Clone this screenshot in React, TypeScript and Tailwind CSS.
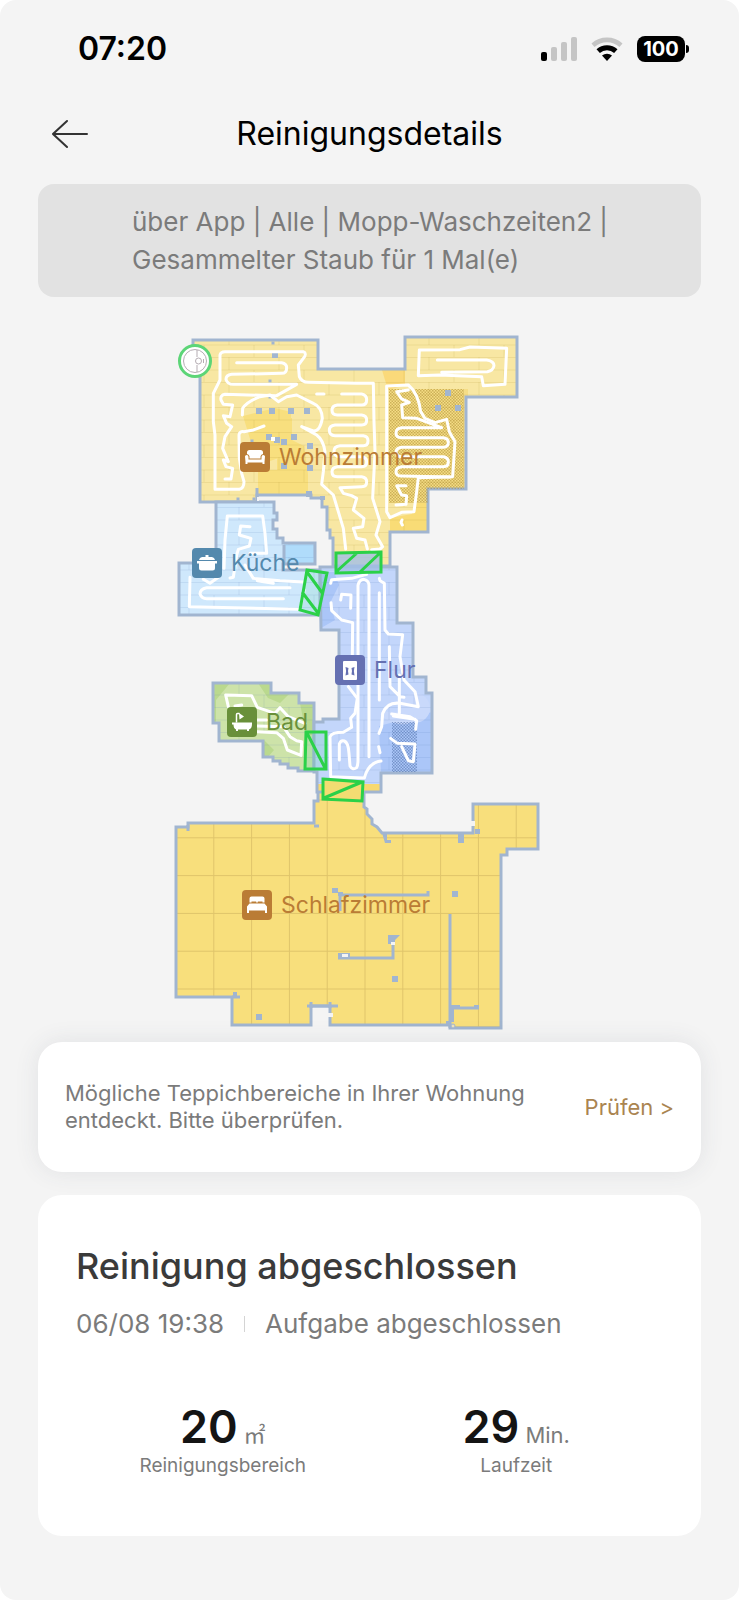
import { ReactNode } from "react";

const WALL = "#a1b5d0";

const StatusBar = () => (
  <div className="flex h-[98px] items-center justify-between pl-[78px] pr-[50px]">
    <span className="text-[32px] leading-[40px] font-semibold text-black">07:20</span>
    <div className="flex items-center">
      <svg width="38" height="24" viewBox="0 0 38 24" aria-hidden="true">
        <rect x="0" y="15" width="6" height="9" rx="2" fill="#000" />
        <rect x="10" y="10" width="6" height="14" rx="2" fill="#c5c5c5" />
        <rect x="20" y="5" width="6" height="19" rx="2" fill="#c5c5c5" />
        <rect x="30" y="0" width="6" height="24" rx="2" fill="#c5c5c5" />
      </svg>
      <svg className="ml-3" width="32" height="24" viewBox="0 0 32 24" fill="none" aria-hidden="true">
        <path d="M2 8.2A21 21 0 0 1 30 8.2" stroke="#c5c5c5" strokeWidth="4.6" />
        <path d="M7.2 14.2A13 13 0 0 1 24.8 14.2" stroke="#000" strokeWidth="5" />
        <path d="M16 24L11 18.6A7.4 7.4 0 0 1 21 18.6Z" fill="#000" />
      </svg>
      <div className="ml-[14px] flex h-[26px] w-12 items-center justify-center rounded-lg bg-black text-[20px] leading-[26px] font-bold text-white">
        100
      </div>
      <div className="ml-px h-2 w-[3px] rounded-r-full bg-black" />
    </div>
  </div>
);

interface RoomLabelProps {
  x: number;
  y: number;
  name: string;
  color: string;
  children: ReactNode;
}

const RoomLabel = ({ x, y, name, color, children }: RoomLabelProps) => (
  <g transform={`translate(${x} ${y})`}>
    <rect width="30" height="30" rx="4" fill={color} />
    {children}
    <text x="39" y="23" fontSize="23" fill={color}>
      {name}
    </text>
  </g>
);

// small square obstacles, centre points
const Obstacles = ({ points, size }: { points: number[][]; size: number }) => (
  <g fill={WALL}>
    {points.map(([x, y]) => (
      <rect key={`${x}-${y}`} x={x - size / 2} y={y - size / 2} width={size} height={size} />
    ))}
  </g>
);

const LIVING =
  "M193 340H318V369H405V337H517V397H466V489H428V532H390V566H333V538H330V530H327V507H322V498H311V495H257V502H200V377L193 370Z";
const KITCHEN =
  "M216 502H274V513H277V520H273V529H277V538H283V543H315V564H283V570H320V615H179V563H216Z";
const HALL =
  "M320 567H397V623H413V677H426V693H432V773H381V792H317V772H314V722H323V719H339V630H321Z";
const BATH =
  "M213 683H271V693H299V703H314V771H298V768H288V764H280V761H273V757H263V741H219V723H213Z";
const BEDROOM =
  "M176 827H188V823H314V801H318V786H364V807L367 809V814L372 819V824L377 827L382 833H473V804H538V849H507V855H501V1028H450V1025H330V1006H311V1025H232V997H176Z";

const CleaningMap = () => (
  <svg
    className="h-auto w-[400px] max-w-full"
    viewBox="170 325 400 710"
    fill="none"
    role="img"
    aria-label="Reinigungskarte"
  >
    <defs>
      <pattern id="planks" width="50" height="25" patternUnits="userSpaceOnUse" x="176" y="332">
        <path d="M0 .5H50M0 13H50M3 0V13M28 13V25" stroke="#a08420" strokeOpacity=".13" />
      </pattern>
      <pattern id="bluePlanks" width="50" height="25" patternUnits="userSpaceOnUse" x="186" y="332">
        <path d="M0 .5H50M0 13H50M3 0V13M28 13V25" stroke="#4a78b8" strokeOpacity=".12" />
      </pattern>
      <pattern id="tiles" width="37.8" height="37.8" patternUnits="userSpaceOnUse" x="176.5" y="800.5">
        <path d="M0 37.3H37.8M37.3 0V37.8" stroke="#dfc46a" />
      </pattern>
      <pattern id="carpet" width="3" height="3" patternUnits="userSpaceOnUse">
        <path d="M0 0h1.5v1.5H0zM1.5 1.5H3V3H1.5z" fill="#a5852c" fillOpacity=".5" />
      </pattern>
      <pattern id="blueCarpet" width="3" height="3" patternUnits="userSpaceOnUse">
        <path d="M0 0h1.5v1.5H0zM1.5 1.5H3V3H1.5z" fill="#4b6ba6" fillOpacity=".55" />
      </pattern>
    </defs>

    {/* Schlafzimmer */}
    <path d={BEDROOM} fill="#f8df7c" />
    <path d={BEDROOM} fill="url(#tiles)" stroke={WALL} strokeWidth="3" />

    {/* Wohnzimmer */}
    <path d={LIVING} fill="#f8e7a3" />
    <path d="M382 370H405V385L388 390Z" fill="#fad97a" />
    <path d="M243 416L275 408L291 412V426H284L288 455L258 465ZM277 418H292V440L304 446L308 474V495H258V470H277Z" fill="#f8df7e" />
    <path d="M466 489H428V532H390V518L412 514L415 505V489Z" fill="#f9dc76" />
    <path d="M389 389H468V397H466V489H428V503H389Z" fill="#f5dd86" />
    <path d={LIVING} fill="url(#planks)" stroke={WALL} strokeWidth="3" />
    <path d="M389 389H464V489H428V503H389Z" fill="url(#carpet)" />

    {/* Küche */}
    <path d={KITCHEN} fill="#cfe8fc" />
    <path d="M284 543H315V564H284Z" fill="#b0dcfb" />
    <path d={KITCHEN} fill="url(#bluePlanks)" stroke={WALL} strokeWidth="3" />
    <path d="M284 545V563" stroke={WALL} strokeWidth="3" />

    {/* Bad */}
    <path d={BATH} fill="#cde3a9" />
    <path d="M213 683H230L216 700V723H213ZM258 683H271V693H290L280 703L268 698ZM264 740L274 750L268 757H264ZM300 703H314V735H306Z" fill="#bad98e" />
    <path d={BATH} fill="url(#bluePlanks)" stroke={WALL} strokeWidth="3" />

    {/* Flur */}
    <path d={HALL} fill="#c3d6fb" />
    <path d="M321 572H334L339 585L330 603L335 620L321 628ZM379 726L432 712V773H381Z" fill="#abc6f8" />
    <circle cx="415" cy="708" r="15" fill="#c9d9fb" />
    <path d="M380 715Q398 730 415 721L413 712H382Z" fill="#c9d9fb" />
    <path d="M318 784H380V791H318Z" fill="#f8d970" />
    <path d={HALL} fill="url(#bluePlanks)" stroke={WALL} strokeWidth="3" />
    <path d="M392 722H417V772H392Z" fill="url(#blueCarpet)" />

    {/* inner walls and gaps */}
    <g stroke={WALL} strokeWidth="3">
      <path d="M340 911V895H428V891M338 958H393V941M450 914V1028M453 1008H479M307 1006H338M311 1002V1008M330 1002V1008M232 997H240M188 825V831M314 826H319M257 488V497" />
    </g>
    <g fill={WALL}>
      <path d="M332 888h6v4h5v4h-5v-3h-6zM338 953h12v6h-12zM388 935h12l-5 5v4h-7zM382 833h5v7h4v3h-6zM458 833h6v10h-6zM475 829h5v5h-5zM452 1005h8v4h-6v13h-4v-17zM474 1005h5v4h-5zM233 992h4v5h-4zM446 1021h5v5h-5zM320 496h5v4h-5z" />
    </g>
    <path d="M342 954h6v3h-6zM391 942h4v3h-4zM470 821h5v5h-5zM328 1013h5v4h-5zM257 497h2v4h-2z" fill="#f4f4f4" />
    <circle cx="453" cy="1026" r="2" fill="#ece2c0" stroke={WALL} />
    <Obstacles size={6} points={[[455, 894], [395, 979], [259, 1017]]} />
    <Obstacles
      size={6}
      points={[
        [259, 411], [272, 411], [291, 411], [307, 411], [275, 355], [294, 437], [284, 442],
        [310, 446], [310, 468], [284, 466], [309, 494], [269, 437], [277, 440], [448, 393],
        [438, 408], [458, 408],
      ]}
    />
    <Obstacles size={3} points={[[273, 343], [270, 381], [270, 397], [238, 499], [254, 499], [252, 441]]} />
    <path d="M271 437h4v4h-4z" fill="#fff" />

    {/* driven route, drawn at three times the map scale */}
    <g stroke="#fff" strokeWidth="9" strokeLinecap="round" strokeLinejoin="round">
      <g transform="translate(170 325) scale(.33333)">
        <path d="M282 303L250 315L222 320Q208 318 207 330L208 400L215 445L222 470Q222 490 208 493L135 493L135 330L130 290V205L150 165V90Q152 80 165 80H400Q412 85 400 100L385 120L388 155Q395 172 415 172L560 175H610L612 290L615 380L608 520L630 590L618 630L638 665L630 672L605 674" />
        <path d="M200 113H335Q350 116 350 128Q350 145 335 145L185 148Q168 150 168 163Q172 178 190 178H380L320 212L165 208Q150 210 153 225L160 238L188 240L180 275L160 272L170 295L185 305L165 335L158 370L175 410L160 405L168 425L188 430L183 462H165" />
        <path d="M217 270L218 250Q230 230 270 215L300 210L325 230L350 215L380 210L430 235Q455 245 457 280Q450 320 430 318L395 305L440 330Q460 345 465 380L460 440L455 478L490 510L505 560L520 610L527 672M440 207H462" />
        <path d="M515 207H575Q590 210 590 224Q590 240 575 240H502Q486 242 486 255Q486 270 502 270H575Q590 272 590 285Q590 300 575 300H495Q478 302 478 316Q478 332 495 332H580Q594 334 594 347Q594 362 580 362H510Q492 364 492 378Q492 395 510 395H575Q590 397 590 410Q590 425 575 425H502Q486 427 486 440Q486 455 502 455H575Q590 457 590 470Q590 485 575 485L510 488L520 505L545 512L560 520L550 555L582 580L578 605L550 610L560 640L585 645L592 672" />
      </g>
      <g transform="translate(350 325) scale(.33333)">
        <path d="M205 150L208 75L330 74L360 66L470 70L465 178L400 182L395 155L270 150L205 152ZM262 105H410Q432 108 432 122Q430 137 412 140L275 142" />
        <path d="M110 183L175 180Q205 205 212 260L225 280L255 293L290 283L298 320L315 350L308 455L205 458L200 500L192 560L155 562L120 578L110 560Z" />
        <path d="M175 195L140 200L155 222L178 232L155 240L158 278L200 280L275 308H155Q138 310 138 324Q138 338 155 338H280Q295 340 295 352Q295 367 280 367H155Q138 369 138 382Q138 395 155 395H280Q295 397 295 410Q295 425 280 425H155Q138 427 138 440Q138 453 155 453L300 456" />
        <path d="M168 482H140L155 510L170 512L168 538L138 540M156 585L153 592L157 600" />
      </g>
      <g transform="translate(170 490) scale(.33333)">
        <path d="M162 235L165 150L172 78H278L285 130L290 190H240" />
        <path d="M240 110L212 108L208 135L243 145L238 168L205 178L200 195L190 262L180 264" />
        <path d="M60 262L58 350L390 358L403 300M100 268L120 280L145 262M225 225L250 265L330 272L400 276M262 272L310 280" />
        <path d="M360 293H110Q90 297 90 312Q95 326 110 326H340" />
      </g>
      <g transform="translate(300 540) scale(.33333)">
        <path d="M92 130L95 119L155 115L200 103M152 205L153 165L125 163L122 180M93 188L95 212L125 240L158 248L157 345" />
        <path d="M118 660V612Q122 600 133 603Q145 608 147 640L150 678Q158 692 170 683Q174 675 174 660V136Q178 118 192 118Q207 122 207 136V650" />
        <path d="M238 115L240 122L253 130L255 270L265 282L308 284L300 350L312 420L345 455L355 500L300 490Q262 485 248 520L245 560L237 580" />
        <path d="M238 158V480M268 320L270 440L300 470L312 472M298 405V520M275 522L330 530L350 542L347 568M280 528L345 538" />
        <path d="M272 595L292 610L345 612L340 665L325 662L305 620" />
        <path d="M243 663Q205 668 193 714L92 710L90 590Q95 577 130 577L155 562L152 535L165 520L172 475L145 440M236 620L240 638" />
      </g>
      <g transform="translate(200 670) scale(.33333)">
        <path d="M85 110L77 75L155 77L172 112L225 130L240 113L265 140L315 160M105 108L125 105M172 150H200M172 168L250 170L270 200L290 212M172 185L230 188L250 205L262 240L303 256L305 215L290 212" />
      </g>
    </g>

    {/* doorways */}
    <g stroke="#2bd148" strokeWidth="3">
      <path d="M336 553L381 552V572L336 573ZM337 571L357 553M360 572L380 553" fill="#a3bfe6" fillOpacity=".8" />
      <path d="M307 570L327 573L318 615L300 610ZM307 572L323 594M302 592L318 613" fill="#4ed0a0" fillOpacity=".15" />
      <path d="M306 732H326V769H305ZM307 733L325 768" fill="#4ed0a0" fillOpacity=".2" />
      <path d="M323 779L363 782L362 801L323 799ZM324 798L362 782" fill="#f3dc72" />
    </g>

    {/* dock */}
    <circle cx="195" cy="361" r="15.5" fill="#fff" stroke="#5cd577" strokeWidth="3" />
    <circle cx="195" cy="361" r="11.5" stroke="#b5adb3" />
    <path d="M197 350V357M197 365V372" stroke="#b5adb3" />
    <circle cx="198.5" cy="361" r="3" stroke="#b5adb3" />
    <path d="M203.500 359V363" stroke="#b5adb3" />

    <RoomLabel x={240} y={442} name="Wohnzimmer" color="#ba7c35">
      <path d="M7 12V10.500Q7 8 9.500 8H20.500Q23 8 23 10.500V12Q20.500 12.500 20.500 14.500V16.500H9.500V14.500Q9.500 12.500 7 12Z" fill="#fff" />
      <path d="M5 14.500Q5 13 6.800 13Q8.500 13 8.500 15V17.500H21.500V15Q21.500 13 23.200 13Q25 13 25 14.500L24.500 20V22H22.500V20.500H7.500V22H5.500V20Z" fill="#fff" />
    </RoomLabel>
    <RoomLabel x={192} y={548} name="Küche" color="#5489ad">
      <path d="M13.500 7H16.500V9H20Q22.500 9.500 23 12H7Q7.500 9.500 10 9H13.500ZM5 13H25V15.500H23V20Q23 22.500 20.500 22.500H9.500Q7 22.500 7 20V15.500H5Z" fill="#fff" />
    </RoomLabel>
    <RoomLabel x={335} y={655} name="Flur" color="#6570b2">
      <rect x="8" y="6" width="14" height="19" rx="1" fill="#fff" />
      <path d="M10.500 12L13.500 13Q12.500 16 13.500 19.500L10.500 20.500Q11.800 16 10.500 12ZM19.500 12L16.500 13Q17.500 16 16.500 19.500L19.500 20.500Q18.200 16 19.500 12Z" fill="#6570b2" />
    </RoomLabel>
    <RoomLabel x={227} y={707} name="Bad" color="#69903a">
      <path d="M5 15.500H25V17Q25 21.500 22 22.500V24H20V22.500H11V24H9V22.500Q6.500 21.500 6.500 17.500H5Z" fill="#fff" />
      <path d="M9.500 15.500V7.500Q9.500 6.500 10.500 6.500H12.500" stroke="#fff" strokeWidth="1.5" />
      <path d="M12 6L17 9.500L12.500 12.500Z" fill="#fff" />
    </RoomLabel>
    <RoomLabel x={242} y={890} name="Schlafzimmer" color="#ba7c35">
      <path d="M7.500 12.500V8.500Q7.500 6.500 9.500 6.500H20.500Q22.500 6.500 22.500 8.500V12.500H20.500V11.500H15.800V12.500H14.200V11.500H9.500V12.500ZM7.500 13.500H22.500L25 16.500V23H23V20.500H7V23H5V16.500Z" fill="#fff" />
    </RoomLabel>
  </svg>
);

const Stat = ({ value, unit, label }: { value: string; unit: string; label: string }) => (
  <div className="flex flex-1 flex-col items-center">
    <div className="flex h-[54px] items-baseline gap-[6px] leading-[54px]">
      <span className="text-[45px] font-semibold text-[#141414]">{value}</span>
      <span className="text-[22px] text-[#7b7b7b]">{unit}</span>
    </div>
    <span className="text-[19px] leading-6 text-[#7b7b7b]">{label}</span>
  </div>
);

const App: React.FC = () => {
  return (
    <div className="min-h-screen bg-white font-['Inter','Noto_Sans_CJK_SC',sans-serif]">
      <main className="flex min-h-screen flex-col rounded-2xl bg-[#f4f4f4] pb-16">
        <StatusBar />
        <header className="grid h-[72px] grid-cols-[1fr_auto_1fr] items-center px-[38px] text-black">
          <button type="button" aria-label="Zurück" className="flex h-12 w-14 items-center pl-[14px]">
            <svg width="37" height="30" viewBox="0 0 37 30" fill="none" stroke="#333" strokeWidth="2" strokeLinecap="round">
              <path d="M15 2L1 15L15 28M1 15H35" />
            </svg>
          </button>
          <h1 className="text-[32px] leading-[40px]">Reinigungsdetails</h1>
        </header>

        <p className="mx-[38px] mt-[14px] rounded-2xl bg-[#e2e2e2] pt-[19px] pb-[18px] pr-20 pl-[94px] text-[26px] leading-[38px] text-[#7b7b7b]">
          über App | Alle | Mopp-Waschzeiten2 | Gesammelter Staub für 1 Mal(e)
        </p>

        <section className="mt-7 flex justify-center">
          <CleaningMap />
        </section>

        <section className="mx-[38px] mt-[7px] flex h-[130px] items-center justify-between gap-6 rounded-3xl bg-white px-[27px] shadow-[0_0_24px_rgba(60,70,90,0.10)]">
          <p className="max-w-[490px] text-[22px] leading-[27px] text-[#7b7b7b]">
            Mögliche Teppichbereiche in Ihrer Wohnung entdeckt. Bitte überprüfen.
          </p>
          <button type="button" className="shrink-0 text-[22px] text-[#aa8450]">
            Prüfen &gt;
          </button>
        </section>

        <section className="mx-[38px] mt-[23px] rounded-3xl bg-white px-[38px] pt-12 pb-[58px]">
          <h2 className="text-[36px] leading-[46px] font-medium text-[#3a3a3a]">Reinigung abgeschlossen</h2>
          <div className="mt-[19px] flex items-center text-[26px] leading-8 text-[#7b7b7b]">
            <span>06/08 19:38</span>
            <span className="mx-5 h-4 w-px bg-[#d4d4d4]" />
            <span>Aufgabe abgeschlossen</span>
          </div>
          <div className="mt-[60px] flex">
            <Stat value="20" unit="㎡" label="Reinigungsbereich" />
            <Stat value="29" unit="Min." label="Laufzeit" />
          </div>
        </section>
      </main>
    </div>
  );
};

export default App;
